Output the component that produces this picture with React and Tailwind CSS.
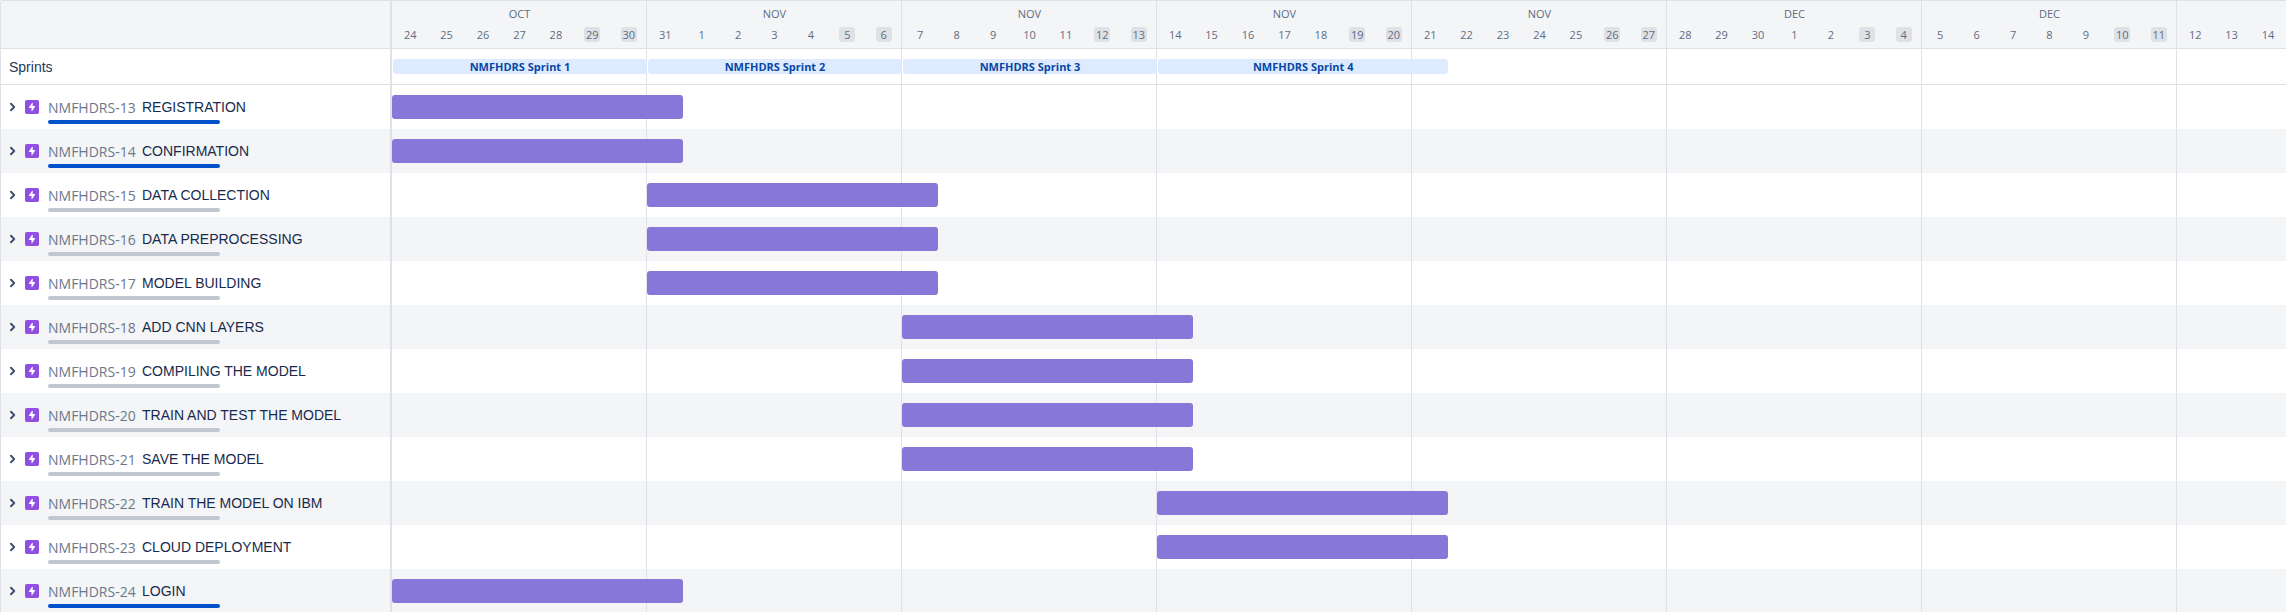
const WEEKS = [
  { month: "OCT", days: [24, 25, 26, 27, 28, 29, 30] },
  { month: "NOV", days: [31, 1, 2, 3, 4, 5, 6] },
  { month: "NOV", days: [7, 8, 9, 10, 11, 12, 13] },
  { month: "NOV", days: [14, 15, 16, 17, 18, 19, 20] },
  { month: "NOV", days: [21, 22, 23, 24, 25, 26, 27] },
  { month: "DEC", days: [28, 29, 30, 1, 2, 3, 4] },
  { month: "DEC", days: [5, 6, 7, 8, 9, 10, 11] },
  { month: "", days: [12, 13, 14] },
];

const SPRINTS = [
  { name: "NMFHDRS Sprint 1", start: 0, days: 7 },
  { name: "NMFHDRS Sprint 2", start: 7, days: 7 },
  { name: "NMFHDRS Sprint 3", start: 14, days: 7 },
  { name: "NMFHDRS Sprint 4", start: 21, days: 8 },
];

// start is the number of days after 24 October
const EPICS = [
  { id: "NMFHDRS-13", title: "REGISTRATION", start: 0, active: true },
  { id: "NMFHDRS-14", title: "CONFIRMATION", start: 0, active: true },
  { id: "NMFHDRS-15", title: "DATA COLLECTION", start: 7 },
  { id: "NMFHDRS-16", title: "DATA PREPROCESSING", start: 7 },
  { id: "NMFHDRS-17", title: "MODEL BUILDING", start: 7 },
  { id: "NMFHDRS-18", title: "ADD CNN LAYERS", start: 14 },
  { id: "NMFHDRS-19", title: "COMPILING THE MODEL", start: 14 },
  { id: "NMFHDRS-20", title: "TRAIN AND TEST THE MODEL", start: 14 },
  { id: "NMFHDRS-21", title: "SAVE THE MODEL", start: 14 },
  { id: "NMFHDRS-22", title: "TRAIN THE MODEL ON IBM", start: 21 },
  { id: "NMFHDRS-23", title: "CLOUD DEPLOYMENT", start: 21 },
  { id: "NMFHDRS-24", title: "LOGIN", start: 0, active: true },
];

const EPIC_DAYS = 8;

function Chevron() {
  return (
    <svg viewBox="0 0 8 10" className="h-[10px] w-2" fill="none" stroke="#42526E" strokeWidth="2" strokeLinecap="round" strokeLinejoin="round" aria-hidden="true">
      <path d="M2 1.8 5.2 5 2 8.2" />
    </svg>
  );
}

function EpicIcon() {
  return (
    <svg viewBox="0 0 14 14" className="size-[14px] shrink-0" role="img" aria-label="Epic">
      <rect width="14" height="14" rx="1.8" fill="#904EE2" />
      <path d="M7.7 3v3.1h2.2c.3 0 .4.3.3.5L7.1 11.2c-.2.2-.6.1-.6-.2V7.9H4.2c-.3 0-.4-.3-.3-.5l3.2-4.6c.2-.2.6-.1.6.2Z" fill="#fff" />
    </svg>
  );
}

// One timeline row: week cells carry the grid lines, children share the same day columns.
function Track({ children }) {
  return (
    <div className="min-w-0 flex-1 overflow-hidden">
      <div className="grid h-full w-[2040px] grid-cols-[repeat(56,minmax(0,1fr))] grid-rows-1 items-center">
        {WEEKS.map((week, i) => (
          <div
            key={i}
            className="row-start-1 h-full border-r border-[#dfe1e6]"
            style={{ gridColumn: `${i * 7 + 1} / span 7` }}
          />
        ))}
        {children}
      </div>
    </div>
  );
}

function SideCell({ children }) {
  return (
    <div className="flex w-[391px] shrink-0 items-center border-r-2 border-[#dfe1e6]">{children}</div>
  );
}

function Header() {
  return (
    <header className="flex h-12 border-b border-[#dfe1e6] bg-[#f4f5f7]">
      <SideCell />
      <Track>
        {WEEKS.map((week, i) => (
          <div
            key={i}
            className="row-start-1 flex h-full flex-col gap-1 pt-1 text-[11px] text-[#5e6c84]"
            style={{ gridColumn: `${i * 7 + 1} / span 7` }}
          >
            <div className="h-[18px] text-center leading-[18px]">{week.month}</div>
            <div className="grid grid-cols-7 justify-items-center">
              {week.days.map((day, d) => (
                <span
                  key={day}
                  className={
                    d > 4
                      ? "w-4 rounded-[3px] bg-[#dfe1e6] text-center leading-[15px]"
                      : "w-4 text-center leading-[15px]"
                  }
                >
                  {day}
                </span>
              ))}
            </div>
          </div>
        ))}
      </Track>
    </header>
  );
}

function SprintRow() {
  return (
    <div className="flex h-9 border-b border-[#dfe1e6]">
      <SideCell>
        <span className="pl-2 font-['Liberation_Sans',Arial,sans-serif] text-sm text-[#253858]">Sprints</span>
      </SideCell>
      <Track>
        {SPRINTS.map((sprint) => (
          <div
            key={sprint.name}
            className="row-start-1 ml-px h-[15px] truncate rounded-[3px] bg-[#deebff] text-center text-[11px] leading-[15px] font-bold text-[#0747a6]"
            style={{ gridColumn: `${sprint.start + 1} / span ${sprint.days}` }}
          >
            {sprint.name}
          </div>
        ))}
      </Track>
    </div>
  );
}

function EpicRow({ epic }) {
  return (
    <li className="flex h-11 odd:bg-white even:bg-[#f4f5f7]">
      <SideCell>
        <button type="button" aria-label={`Expand ${epic.id}`} aria-expanded="false" className="ml-2 flex h-6 w-4 shrink-0 items-center">
          <Chevron />
        </button>
        <EpicIcon />
        <div className="ml-[9px] flex flex-col gap-[3px] self-start pt-3">
          <div className="flex h-5 items-center">
            <a href={`#${epic.id}`} className="w-[94px] pt-px font-['Open_Sans',sans-serif] text-sm leading-5 text-[#6b778c]">
              {epic.id}
            </a>
            <span className="font-['Liberation_Sans',Arial,sans-serif] text-sm leading-5 whitespace-nowrap text-[#172b4d]">
              {epic.title}
            </span>
          </div>
          <div className={epic.active ? "h-1 w-[172px] rounded-full bg-[#0052cc]" : "h-1 w-[172px] rounded-full bg-[#c1c7d0]"} />
        </div>
      </SideCell>
      <Track>
        <div
          className="row-start-1 h-6 rounded-[3px] bg-[#8777d9]"
          style={{ gridColumn: `${epic.start + 1} / span ${EPIC_DAYS}` }}
        />
      </Track>
    </li>
  );
}

export default function App() {
  return (
    <main className="h-screen overflow-hidden rounded-tl-[3px] border-t border-l border-[#dfe1e6] bg-white font-['Open_Sans',sans-serif]">
      <Header />
      <SprintRow />
      <ul>
        {EPICS.map((epic) => (
          <EpicRow key={epic.id} epic={epic} />
        ))}
      </ul>
    </main>
  );
}
